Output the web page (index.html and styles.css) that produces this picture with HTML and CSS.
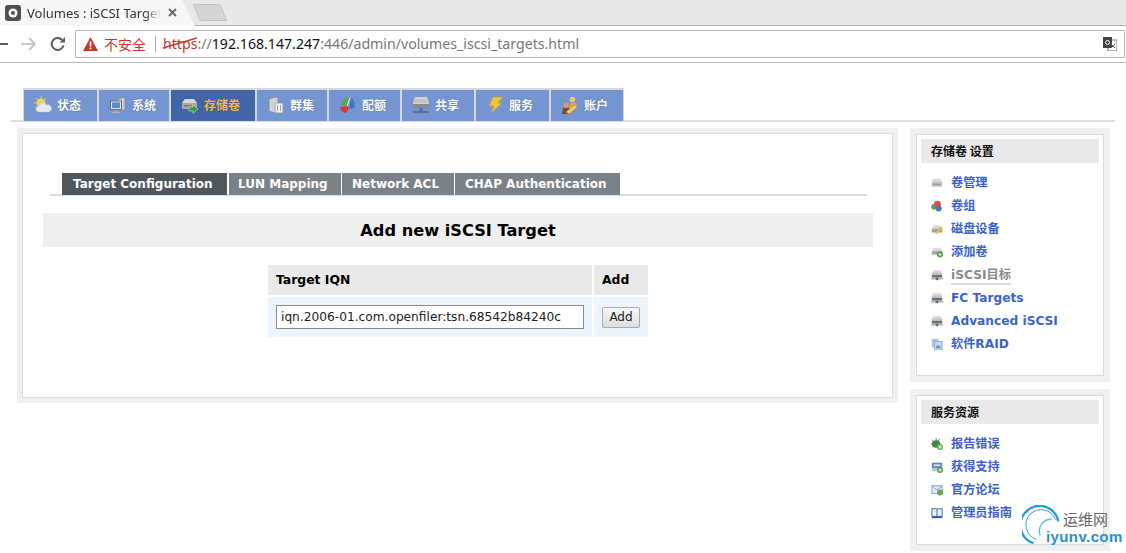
FILE: index.html
```html
<!DOCTYPE html>
<html lang="zh">
<head>
<meta charset="utf-8">
<title>Volumes : iSCSI Targets</title>
<link rel="stylesheet" href="styles.css">
</head>
<body>
<svg class="defs" width="0" height="0">
  <defs>
    <linearGradient id="gtop" x1="0" y1="0" x2="0" y2="1"><stop offset="0" stop-color="#e6e6e6"/><stop offset="1" stop-color="#a9a9a9"/></linearGradient>
  </defs>
  <symbol id="drive" viewBox="0 0 14 14"><path d="M3 1h8l2 4v4H1V5z" fill="url(#gtop)"/><rect x="1" y="7" width="12" height="3" fill="#707070"/><rect x="0" y="11" width="14" height="1" fill="#777"/><rect x="5.500" y="10" width="3" height="3" fill="#3f6fc0"/></symbol>
  <symbol id="disk" viewBox="0 0 14 14"><path d="M3 2h8l2 4v5H1V6z" fill="#d6d6d6"/><rect x="1" y="6" width="12" height="5" fill="#bdbdbd"/><rect x="3" y="8" width="8" height="1" fill="#8a8a8a"/></symbol>
</svg>

<header class="chrome">
  <div class="tabstrip">
    <div class="tab">
      <svg class="favicon" viewBox="0 0 16 16"><rect width="16" height="16" rx="3" fill="#4c5054"/><circle cx="8" cy="8" r="4.500" fill="#fff"/><circle cx="8" cy="8" r="2" fill="#4c5054"/></svg>
      <span class="tab-title">Volumes : iSCSI Targets</span>
      <svg class="tab-close" viewBox="0 0 9 9"><path d="M1 1l7 7M8 1L1 8" stroke="#666" stroke-width="1.800"/></svg>
    </div>
    <div class="newtab"></div>
  </div>
  <div class="toolbar">
    <svg class="tool back" viewBox="0 0 16 16"><path d="M1 8h15M1 8l6-6M1 8l6 6" fill="none" stroke="#5a5a5a" stroke-width="2"/></svg>
    <svg class="tool forward" viewBox="0 0 16 16"><path d="M0 8h14M14 8L8 2M14 8l-6 6" fill="none" stroke="#c8c8c8" stroke-width="2"/></svg>
    <svg class="tool reload" viewBox="0 0 16 16"><path d="M13.500 9.500A6 6 0 1 1 12 3.800" fill="none" stroke="#5a5a5a" stroke-width="2"/><path d="M9.500 6.500H15V1z" fill="#5a5a5a"/></svg>
    <div class="omnibox">
      <svg class="warn" viewBox="0 0 15 14"><path d="M7.500 0L15 14H0z" fill="#c5392b"/><rect x="6.700" y="4.500" width="1.700" height="5" fill="#fff"/><rect x="6.700" y="10.500" width="1.700" height="1.700" fill="#fff"/></svg>
      <span class="insecure">不安全</span>
      <span class="omni-sep"></span>
      <span class="url"><span class="scheme">https<svg class="strike" viewBox="0 0 34 12"><path d="M0 11L34 1" stroke="#c5392b" stroke-width="1.500"/></svg></span><span class="dim">://</span>192.168.147.247<span class="dim">:446/admin/volumes_iscsi_targets.html</span></span>
      <svg class="translate" viewBox="0 0 14 14"><rect x="5" y="3" width="9" height="11" fill="#fff" stroke="#777"/><rect width="9" height="11" fill="#444"/><circle cx="4.500" cy="5.500" r="2" fill="none" stroke="#fff"/><path d="M8 7l4 4M12 7l-4 4" stroke="#666"/></svg>
    </div>
  </div>
</header>

<main class="page">
  <nav class="nav">
    <a class="nav-item n1"><svg class="nav-icon" viewBox="0 0 18 18"><circle cx="7" cy="7" r="4.500" fill="#f4cf5b"/><path d="M7 0v3M0 7h3M2 2l2 2M12 2l-2 2M1.500 12l2-2" stroke="#f2c84a"/><path d="M5 16a3 3 0 0 1 0-6 4 4 0 0 1 7.500-1 3.500 3.500 0 0 1 2.500 7z" fill="#e6e9ef" stroke="#b8c0cc" stroke-width=".5"/></svg><span>状态</span></a>
    <a class="nav-item n2"><svg class="nav-icon" viewBox="0 0 18 18"><path d="M9 3l7-2v13l-7 1z" fill="#c8ccd2" stroke="#7a7f88" stroke-width=".7"/><rect x="1.500" y="5" width="11" height="8.500" fill="#dfe3e8" stroke="#6a7078"/><rect x="3" y="6.500" width="8" height="5.500" fill="#5b89c9"/><path d="M5 14.500h4v1H5zM3 16h8v1H3z" fill="#b4b8bd"/></svg><span>系统</span></a>
    <a class="nav-item n3 active"><svg class="nav-icon" viewBox="0 0 18 18"><path d="M4 3h9l3 4v6H1V7z" fill="#d8d8d8"/><rect x="1" y="7" width="15" height="6" fill="#a8a8a8"/><rect x="3" y="9" width="8" height="1.500" fill="#777"/><path d="M8 11h4V8.500l5 4.500-5 4.500V15H8z" fill="#3f9a46" stroke="#e8f4e0" stroke-width=".5"/></svg><span>存储卷</span></a>
    <a class="nav-item n4"><svg class="nav-icon" viewBox="0 0 18 18"><path d="M2 3l6-2 3 1v13l-3 2-6-2z" fill="#cfd2d6" stroke="#80868c" stroke-width=".7"/><rect x="8" y="7" width="8" height="10" rx="1.500" fill="#eef0f2" stroke="#8a9096" stroke-width=".7"/><path d="M10.500 9v6M13.500 9v6" stroke="#9aa0a6"/></svg><span>群集</span></a>
    <a class="nav-item n5"><svg class="nav-icon" viewBox="0 0 18 18"><path d="M3 9a6 6 0 0 1 8-7l-3 8z" fill="#5aa84f"/><path d="M12 2c3 1 5 5 3 10l-5 1z" fill="#3f76c8"/><path d="M1 11l7-1 2 3-3 4c-3 0-6-3-6-6z" fill="#d8373a"/><path d="M8 10l3-8" stroke="#e8f0e8"/></svg><span>配额</span></a>
    <a class="nav-item n6"><svg class="nav-icon" viewBox="0 0 18 18"><path d="M3 1h12l2 6v5H1V7z" fill="#d4d4d4"/><path d="M3 4h12M2.500 6h13" stroke="#b0b0b0"/><rect x="1" y="8" width="16" height="4" fill="#8a8a8a"/><path d="M1 16h16" stroke="#666" stroke-width="1.500"/><rect x="7.500" y="12" width="3" height="5" fill="#3f6fc0"/></svg><span>共享</span></a>
    <a class="nav-item n7"><svg class="nav-icon" viewBox="0 0 18 18"><path d="M7 1h10l-5 6h4L5 17l3-7H3z" fill="#f0c53a" stroke="#c99a2a" stroke-width=".6"/></svg><span>服务</span></a>
    <a class="nav-item n8"><svg class="nav-icon" viewBox="0 0 18 18"><circle cx="11.500" cy="3.500" r="2.800" fill="#eec27a"/><path d="M8 14l.5-7h7l1 5z" fill="#e0a540"/><circle cx="5" cy="9" r="2.500" fill="#d89a60"/><path d="M1 18l1-6h6l1 6z" fill="#7a4a2a"/><path d="M5 16l9-7 2 2-8 7z" fill="#f2d36a" stroke="#b8862c" stroke-width=".5"/></svg><span>账户</span></a>
  </nav>

  <div class="columns">
    <section class="panel">
      <div class="subnav">
        <a class="sub-item active">Target Configuration</a>
        <a class="sub-item s2">LUN Mapping</a>
        <a class="sub-item s3">Network ACL</a>
        <a class="sub-item s4">CHAP Authentication</a>
      </div>
      <h2 class="title">Add new iSCSI Target</h2>
      <table class="form">
        <tr><th class="col-iqn">Target IQN</th><th class="col-add">Add</th></tr>
        <tr>
          <td><input class="iqn" type="text" value="iqn.2006-01.com.openfiler:tsn.68542b84240c"></td>
          <td><button class="add" type="button">Add</button></td>
        </tr>
      </table>
    </section>

    <aside class="sidebar">
      <div class="box box-settings">
        <h3 class="box-title">存储卷 设置</h3>
        <ul class="links">
          <li><svg class="ico"><use href="#disk"/></svg><a>卷管理</a></li>
          <li><svg class="ico" viewBox="0 0 14 14"><circle cx="3.500" cy="8" r="3.300" fill="#5a9a6a"/><circle cx="7.500" cy="5" r="4" fill="#d85050"/><circle cx="9" cy="10" r="3.500" fill="#4a76b8"/></svg><a>卷组</a></li>
          <li><svg class="ico" viewBox="0 0 14 14"><path d="M3 3h8l2 4v4H1V7z" fill="#d4d4d4"/><rect x="1" y="7" width="12" height="4" fill="#a0a0a0"/><path d="M5 13l1-3 6-6 2 2-6 6z" fill="#e8b83a"/></svg><a>磁盘设备</a></li>
          <li><svg class="ico" viewBox="0 0 14 14"><path d="M3 2h8l2 4v4H1V6z" fill="#dadada"/><rect x="1" y="6" width="12" height="4" fill="#a8a8a8"/><circle cx="10.500" cy="10" r="3.500" fill="#4f9a45"/><path d="M8.500 10h4M10.500 8v4" stroke="#fff"/></svg><a>添加卷</a></li>
          <li><svg class="ico"><use href="#drive"/></svg><a class="current">iSCSI目标</a></li>
          <li><svg class="ico"><use href="#drive"/></svg><a>FC Targets</a></li>
          <li><svg class="ico"><use href="#drive"/></svg><a>Advanced iSCSI</a></li>
          <li><svg class="ico" viewBox="0 0 14 14"><rect x="1" y="1" width="8" height="10" fill="#a9c4ea"/><rect x="4" y="4" width="9" height="10" fill="#c6d8f0" stroke="#8aa8d4"/><rect x="6" y="9" width="5" height="3" fill="#5f9a9f"/></svg><a>软件RAID</a></li>
        </ul>
      </div>
      <div class="box box-support">
        <h3 class="box-title">服务资源</h3>
        <ul class="links">
          <li><svg class="ico" viewBox="0 0 14 14"><ellipse cx="6" cy="7" rx="5" ry="4.500" fill="#3f8a3c"/><path d="M1 2l3 3M6 0v3M10 1L8 4M0 7h2" stroke="#3f8a3c"/><circle cx="10.500" cy="10.500" r="3.500" fill="#6ab04c"/><path d="M8.500 10.500h4M10.500 8.500v4" stroke="#fff"/></svg><a>报告错误</a></li>
          <li><svg class="ico" viewBox="0 0 14 14"><rect x="1" y="2" width="12" height="9" fill="#5f86b8"/><rect x="3" y="4" width="8" height="2" fill="#dce6f2"/><rect x="1" y="8" width="8" height="4" fill="#b8c8dc"/><circle cx="10.500" cy="10.500" r="3.500" fill="#5aa04a"/><path d="M8.500 10.500h4M10.500 8.500v4" stroke="#fff"/></svg><a>获得支持</a></li>
          <li><svg class="ico" viewBox="0 0 14 14"><rect x="1" y="2" width="12" height="9" fill="#e2ebf5" stroke="#7c9cc4"/><path d="M1 2l6 5 6-5" fill="none" stroke="#7c9cc4"/><circle cx="10.500" cy="10" r="3.500" fill="#6aa84a"/></svg><a>官方论坛</a></li>
          <li><svg class="ico" viewBox="0 0 14 14"><path d="M1 2h5.500l.5 1 .5-1H13v9H1z" fill="#e8eef6" stroke="#2f5f8f"/><path d="M7 3v8" stroke="#2f5f8f"/><rect x="1" y="11" width="12" height="2" fill="#2f5f8f"/></svg><a>管理员指南</a></li>
        </ul>
      </div>
    </aside>
  </div>
</main>

<div class="watermark">
  <svg class="wm-arcs" viewBox="0 0 44 44"><path d="M12 40A20 20 0 1 1 38 17" fill="none" stroke="#2a9ad8" stroke-width="2.500"/><path d="M15 36A16 16 0 1 1 35 15" fill="none" stroke="#2a9ad8" stroke-width="1"/><path d="M19 32A12.500 12.500 0 0 1 31 15" fill="none" stroke="#6ab8e6" stroke-width="1.500"/></svg>
  <span class="wm-cn">运维网</span>
  <span class="wm-en">iyunv.com</span>
</div>
</body>
</html>
```
FILE: styles.css
```css
* { box-sizing: border-box; }
html, body { height: 553px; overflow: hidden; }
body { margin: 0; background: #fff; font-family: "DejaVu Sans", "Noto Sans CJK SC", sans-serif; color: #000; position: relative; }
.defs { position: absolute; }
a { color: inherit; text-decoration: none; }

/* browser chrome */
.chrome { height: 63px; }
.tabstrip { height: 26px; background: #e8e8e8; border-bottom: 1px solid #aeaeae; display: flex; align-items: flex-start; }
.tab { width: 195px; height: 26px; background: #f7f7f7; clip-path: polygon(0 0, 182px 0, 195px 26px, 0 26px); display: flex; align-items: center; padding: 0 0 1px 5px; }
.favicon { width: 16px; height: 16px; flex: none; }
.tab-title { margin-left: 6px; width: 134px; overflow: hidden; white-space: nowrap; font: 13px/18px "Noto Sans", sans-serif; color: #333; -webkit-mask-image: linear-gradient(90deg, #000 88%, transparent); mask-image: linear-gradient(90deg, #000 88%, transparent); }
.tab-close { width: 9px; height: 9px; margin-left: 7px; flex: none; }
.newtab { width: 28px; height: 17px; margin: 4px 0 0 1px; background: #d4d4d4; border: 1px solid #c4c4c4; border-radius: 2px; transform: skewX(22deg); }
.toolbar { height: 37px; background: #fff; border-bottom: 1px solid #bababa; display: flex; align-items: center; }
.tool { width: 16px; height: 16px; flex: none; }
.back { margin-left: -8px; }
.forward { margin-left: 13px; }
.reload { margin-left: 13px; }
.omnibox { flex: none; width: 1050px; height: 28px; margin-left: 9px; border: 1px solid #b4b4b4; border-radius: 2px; display: flex; align-items: center; padding-left: 7px; }
.warn { width: 15px; height: 14px; flex: none; }
.insecure { margin-left: 6px; font: 14px/18px "Noto Sans CJK SC", sans-serif; color: #c5392b; }
.omni-sep { width: 1px; height: 16px; background: #aaa; margin: 0 7px 0 9px; }
.url { font: 14.150px/20px "Noto Sans", sans-serif; color: #111; white-space: nowrap; }
.scheme { color: #c5392b; position: relative; }
.strike { position: absolute; left: 0; top: 3px; width: 34px; height: 12px; }
.dim { color: #777; }
.translate { width: 14px; height: 14px; margin-left: auto; margin-right: 7px; }

/* app navigation */
.page { padding-top: 25px; }
.nav { margin: 0 11px; padding-left: 13px; height: 34px; border-bottom: 2px solid #ddd; display: flex; gap: 2px; }
.nav-item { height: 33px; background: #7495d2; border-top: 2px solid #d8d8d8; box-shadow: 1px 0 0 #d8d8d8, -1px 0 0 #d8d8d8; color: #fff; font: bold 12px/16px "Noto Sans CJK SC", sans-serif; display: flex; align-items: center; gap: 5px; padding: 0 0 1px 10px; text-shadow: 0 0 1px #40557f; }
.nav-icon { width: 18px; height: 18px; flex: none; }
.n1 { width: 73px; } .n2 { width: 70px; } .n3 { width: 84px; } .n4 { width: 70px; }
.n5 { width: 71px; } .n6 { width: 72px; } .n7 { width: 73px; } .n8 { width: 72px; }
.nav-item.active { background: #4265a8; color: #f3b73c; }

.columns { display: flex; align-items: flex-start; margin: 6px 0 0 17px; gap: 12px; }
.panel { width: 881px; height: 275px; border: 5px solid #f0f0f0; background: #fff; box-shadow: inset 0 0 0 1px #dcdcdc; padding: 40px 20px 0 21px; }
.subnav { display: flex; gap: 1px; margin: 0 6px 0 7px; padding-left: 12px; height: 23px; border-bottom: 2px solid #ddd; }
.sub-item { height: 22px; background: #7a8288; color: #fff; font: bold 12px/22px "DejaVu Sans", sans-serif; padding: 0 9px; white-space: nowrap; }
.sub-item.active { background: #4f565c; width: 165px; padding-left: 11px; }
.s2 { width: 112px; margin-left: 1px; } .s3 { width: 112px; padding-left: 10px; } .s4 { width: 165px; padding-left: 10px; }
.title { margin: 17px 0 16px; height: 34px; background: #efefef; text-align: center; font: bold 16.200px/35px "DejaVu Sans", sans-serif; }
.form { border-collapse: separate; border-spacing: 2px; margin: 0 auto; }
.form th { background: #e9e9e9; height: 30px; padding: 0 8px; text-align: left; font: bold 12.400px/16px "DejaVu Sans", sans-serif; }
.form td { background: #ecf4fc; height: 40px; padding: 0 8px; }
.col-iqn { width: 324px; }
.col-add { width: 54px; }
.iqn { display: block; width: 308px; height: 24px; border: 1px solid #8a8a8a; padding: 0 4px; font: 12.200px/20px "DejaVu Sans", sans-serif; color: #222; background: #fff; }
.add { display: block; width: 38px; height: 21px; padding: 0; border: 1px solid #aaa; border-radius: 2px; background: linear-gradient(#f6f6f6, #dedede); font: 12px/18px "DejaVu Sans", sans-serif; color: #222; }

/* sidebar */
.sidebar { width: 200px; display: flex; flex-direction: column; gap: 7px; }
.box { border: 6px solid #f0f0f0; background: #fff; box-shadow: inset 0 0 0 1px #dcdcdc; padding: 5px; }
.box-settings { height: 254px; }
.box-support { height: 162px; }
.box-title { margin: 0; height: 24px; background: #e9e9e9; padding-left: 10px; font: bold 12px/23px "Noto Sans CJK SC", sans-serif; color: #111; }
.links { list-style: none; margin: 8px 0 0; padding: 0 0 0 10px; }
.links li { height: 23px; display: flex; align-items: center; gap: 8px; }
.links a { font: bold 12.200px/16px "DejaVu Sans", "Noto Sans CJK SC", sans-serif; color: #3d62cc; white-space: nowrap; }
.links a.current { color: #8a8a8a; box-shadow: 0 2px 0 #ddd; }
.ico { width: 12px; height: 12px; flex: none; }

/* watermark overlay */
.watermark { position: absolute; left: 1022px; top: 505px; width: 104px; height: 46px; }
.wm-arcs { position: absolute; left: 0; top: 0; width: 42px; height: 42px; }
.wm-cn { position: absolute; left: 41px; top: 4px; font: 15px/20px "Noto Sans CJK SC", sans-serif; color: #666; }
.wm-en { position: absolute; left: 24px; top: 23px; font: bold 15px/18px "Liberation Sans", sans-serif; letter-spacing: .4px; color: #2a8fd0; white-space: nowrap; }
```
